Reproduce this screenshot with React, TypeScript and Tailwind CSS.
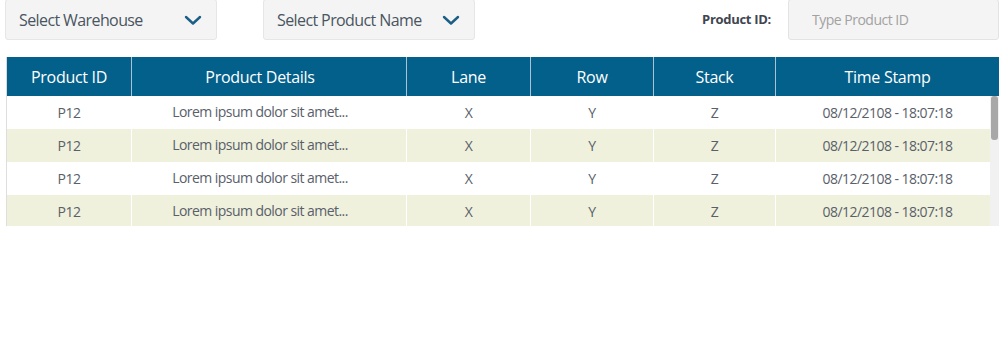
import React from 'react'

const columns = [
  { label: 'Product ID', width: 'w-[125px]', pad: '' },
  { label: 'Product Details', width: 'w-[275px]', pad: 'pr-[18px]' },
  { label: 'Lane', width: 'w-[124px]', pad: '' },
  { label: 'Row', width: 'w-[123px]', pad: '' },
  { label: 'Stack', width: 'w-[122px]', pad: '' },
  { label: 'Time Stamp', width: 'flex-1', pad: '' },
]

const rows = [
  { id: 'P12', details: 'Lorem ipsum dolor sit amet...', lane: 'X', row: 'Y', stack: 'Z', time: '08/12/2108 - 18:07:18' },
  { id: 'P12', details: 'Lorem ipsum dolor sit amet...', lane: 'X', row: 'Y', stack: 'Z', time: '08/12/2108 - 18:07:18' },
  { id: 'P12', details: 'Lorem ipsum dolor sit amet...', lane: 'X', row: 'Y', stack: 'Z', time: '08/12/2108 - 18:07:18' },
  { id: 'P12', details: 'Lorem ipsum dolor sit amet...', lane: 'X', row: 'Y', stack: 'Z', time: '08/12/2108 - 18:07:18' },
]

function Chevron() {
  return (
    <svg width="18" height="12" viewBox="0 0 18 12" fill="none" stroke="#1b5e86" strokeWidth="2.4" strokeLinecap="round" strokeLinejoin="round">
      <path d="M2 3l7 6.5L16 3" />
    </svg>
  )
}

function Dropdown({ label }: { label: string }) {
  return (
    <button className="flex h-[41px] w-[212px] items-center justify-between rounded-[3px] border border-[#e6e6e6] bg-[#f4f4f4] pl-[13px] pr-[14px] text-[16px] tracking-[-0.6px] text-[#4a5561]">
      <span>{label}</span>
      <Chevron />
    </button>
  )
}

export default function App() {
  return (
    <div className="h-[357px] w-[999px] overflow-hidden bg-white font-['Open_Sans',sans-serif]">
      {/* filtros */}
      <div className="flex items-start">
        <div className="ml-[5px] -mt-[1px]">
          <Dropdown label="Select Warehouse" />
        </div>
        <div className="ml-[46px] -mt-[1px]">
          <Dropdown label="Select Product Name" />
        </div>
        <div className="ml-auto flex items-center">
          <span className="mr-[17px] text-[13px] font-bold tracking-[-0.3px] text-[#3f4650]">Product ID:</span>
          <input
            placeholder="Type Product ID"
            className="h-[41px] w-[211px] -mt-[1px] rounded-[3px] border border-[#e3e3e3] bg-[#f4f4f4] pl-[23px] text-[14px] tracking-[-0.5px] text-[#555] placeholder:text-[#a2a2a2] outline-none"
          />
        </div>
      </div>

      {/* tabla */}
      <div className="ml-[6px] mt-[17px]">
        <div className="flex h-[39px] bg-[#03608b] border-l border-[#d9d9d9]">
          {columns.map((c, i) => (
            <div
              key={c.label}
              className={`${c.width} ${c.pad} flex items-center justify-center text-[16px] tracking-[-0.3px] text-white ${i < columns.length - 1 ? 'border-r border-[#a9c3d3]' : ''}`}
            >
              {c.label}
            </div>
          ))}
        </div>
        <div className="relative h-[130px] overflow-hidden border-l border-[#dedede]">
          {rows.map((r, ri) => (
            <div key={ri} className={`flex h-[33px] text-[14px] tracking-[-0.55px] text-[#59606a] ${ri % 2 === 1 ? 'bg-[#eff1dc]' : 'bg-white'}`}>
              {[r.id, r.details, r.lane, r.row, r.stack, r.time].map((v, ci) => (
                <div
                  key={ci}
                  className={`${columns[ci].width} ${columns[ci].pad} flex items-center justify-center ${ci === 1 ? 'pb-[3px]' : ''} ${ci < columns.length - 1 ? 'border-r border-white' : ''}`}
                >
                  {v}
                </div>
              ))}
            </div>
          ))}
          {/* barra de scroll */}
          <div className="absolute right-0 top-0 h-full w-[9px] bg-[#f1f1f1]">
            <div className="ml-[1px] h-[44px] w-[7px] rounded-[3px] bg-[#a8a8a8]" />
          </div>
        </div>
      </div>
    </div>
  )
}
